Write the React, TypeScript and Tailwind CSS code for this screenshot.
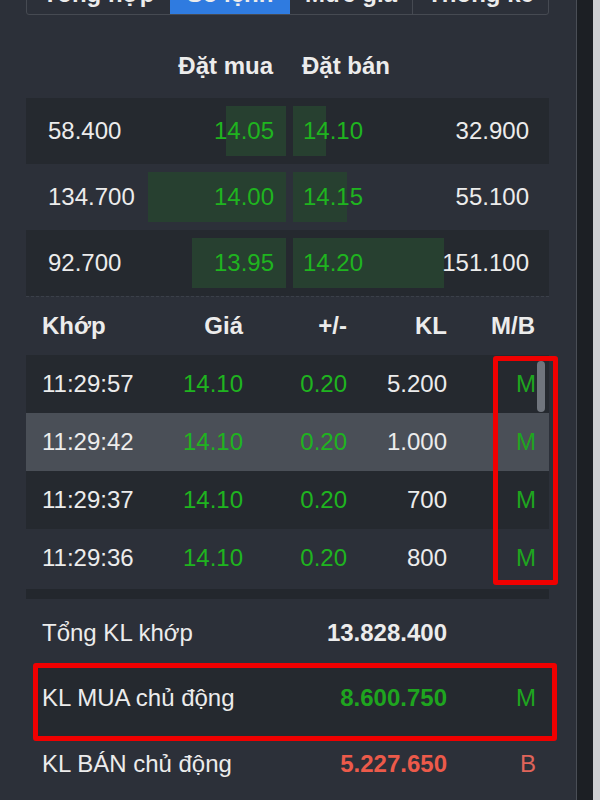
import React from "react";

const tabs = [
  { label: "Tổng hợp", w: "w-[143px]", active: false },
  { label: "Sổ lệnh", w: "w-[120px]", active: true },
  { label: "Mức giá", w: "w-[122px]", active: false },
  { label: "Thống kê", w: "flex-1", active: false },
];

const book = [
  { bidVol: "58.400", bid: "14.05", bidW: 60, ask: "14.10", askW: 33, askVol: "32.900" },
  { bidVol: "134.700", bid: "14.00", bidW: 138, ask: "14.15", askW: 54, askVol: "55.100" },
  { bidVol: "92.700", bid: "13.95", bidW: 94, ask: "14.20", askW: 151, askVol: "151.100" },
];

const trades = [
  { time: "11:29:57", price: "14.10", chg: "0.20", vol: "5.200", side: "M" },
  { time: "11:29:42", price: "14.10", chg: "0.20", vol: "1.000", side: "M" },
  { time: "11:29:37", price: "14.10", chg: "0.20", vol: "700", side: "M" },
  { time: "11:29:36", price: "14.10", chg: "0.20", vol: "800", side: "M" },
];

const tradeBg = ["bg-[#25292f]", "bg-[#4a4f57]", "bg-[#25292f]", "bg-[#2c3039]"];
const bookBg = ["bg-[#25292f]", "bg-[#2c3039]", "bg-[#25292f]"];

export default function App() {
  return (
    <div
      className="w-[600px] h-[800px] overflow-hidden flex text-[24px] text-[#ececec]"
      style={{ fontFamily: '"Liberation Sans", Arial, sans-serif' }}
    >
      <div className="w-[576px] bg-[#2c3039] flex flex-col pl-[26px] pr-[27px]">
        {/* tabs */}
        <div className="mt-[-21px] h-[36px] flex border border-[#464a52] rounded-b-[3px] overflow-hidden">
          {tabs.map((t, i) => (
            <div
              key={t.label}
              className={`${t.w} flex items-center justify-center pb-[6px] font-bold ${
                t.active ? "bg-[#2f7be0]" : ""
              } ${i > 0 && !t.active && !tabs[i - 1].active ? "border-l border-[#464a52]" : ""}`}
            >
              {t.label}
            </div>
          ))}
        </div>

        {/* order book header */}
        <div className="mt-[29px] h-[44px] flex items-center font-bold">
          <div className="w-[247px] text-right pr-0">Đặt mua</div>
          <div className="pl-[29px]">Đặt bán</div>
        </div>

        {/* order book */}
        <div className="mt-[10px] flex flex-col border-b border-dashed border-[#3b4049]">
          {book.map((r, i) => (
            <div key={i} className={`h-[66px] flex ${bookBg[i]}`}>
              <div className="w-[260px] relative flex items-center justify-between pl-[22px] pr-[12px]">
                <div
                  className="absolute right-0 top-[8px] bottom-[8px] bg-[#274030]"
                  style={{ width: r.bidW }}
                />
                <span className="relative">{r.bidVol}</span>
                <span className="relative text-[#1fb41f]">{r.bid}</span>
              </div>
              <div className="w-[7px]" />
              <div className="flex-1 relative flex items-center justify-between pl-[10px] pr-[20px]">
                <div
                  className="absolute left-0 top-[8px] bottom-[8px] bg-[#274030]"
                  style={{ width: r.askW }}
                />
                <span className="relative text-[#1fb41f]">{r.ask}</span>
                <span className="relative">{r.askVol}</span>
              </div>
            </div>
          ))}
        </div>

        {/* matching table header */}
        <div className="h-[58px] grid grid-cols-[110px_91px_104px_100px_1fr] items-center pl-[16px] pr-[14px] font-bold">
          <div>Khớp</div>
          <div className="text-right">Giá</div>
          <div className="text-right">+/-</div>
          <div className="text-right">KL</div>
          <div className="text-right">M/B</div>
        </div>

        {/* matching rows */}
        <div className="relative">
          {trades.map((t, i) => (
            <div
              key={i}
              className={`h-[58px] grid grid-cols-[110px_91px_104px_100px_1fr] items-center pl-[16px] pr-[13px] ${tradeBg[i]}`}
            >
              <div>{t.time}</div>
              <div className="text-right text-[#1fb41f]">{t.price}</div>
              <div className="text-right text-[#1fb41f]">{t.chg}</div>
              <div className="text-right">{t.vol}</div>
              <div className="text-right text-[#1fa51f]">{t.side}</div>
            </div>
          ))}
          <div className="absolute left-[511px] top-[6px] w-[8px] h-[51px] rounded-full bg-[#70757d]" />
          <div className="absolute left-[467px] top-[1px] w-[65px] h-[229px] border-[5px] border-[#f00000] rounded-[3px]" />
        </div>
        <div className="mt-[2px] h-[10px] bg-[#23272d]" />

        {/* summary */}
        <div className="mt-[10px] h-[48px] grid grid-cols-[250px_155px_1fr] items-center pl-[16px] pr-[13px]">
          <div>Tổng KL khớp</div>
          <div className="text-right font-bold">13.828.400</div>
          <div />
        </div>
        <div className="mt-[6px] ml-[7px] mr-[-8px] h-[78px] border-[5px] border-[#f00000] rounded-[3px] bg-[#25292f] grid grid-cols-[250px_155px_1fr] items-center pl-[4px] pr-[16px] pb-[8px]">
          <div>KL MUA chủ động</div>
          <div className="text-right font-bold text-[#1fa51f]">8.600.750</div>
          <div className="text-right text-[#1fa51f]">M</div>
        </div>
        <div className="h-[46px] grid grid-cols-[250px_155px_1fr] items-center pl-[16px] pr-[13px]">
          <div>KL BÁN chủ động</div>
          <div className="text-right font-bold text-[#ec5a4a]">5.227.650</div>
          <div className="text-right text-[#e0645a]">B</div>
        </div>
      </div>
      <div className="w-px bg-[#4a4e56]" />
      <div className="w-[16px] bg-[#1c1f24]" />
      <div className="flex-1 bg-[#cfd0d3]" />
    </div>
  );
}
